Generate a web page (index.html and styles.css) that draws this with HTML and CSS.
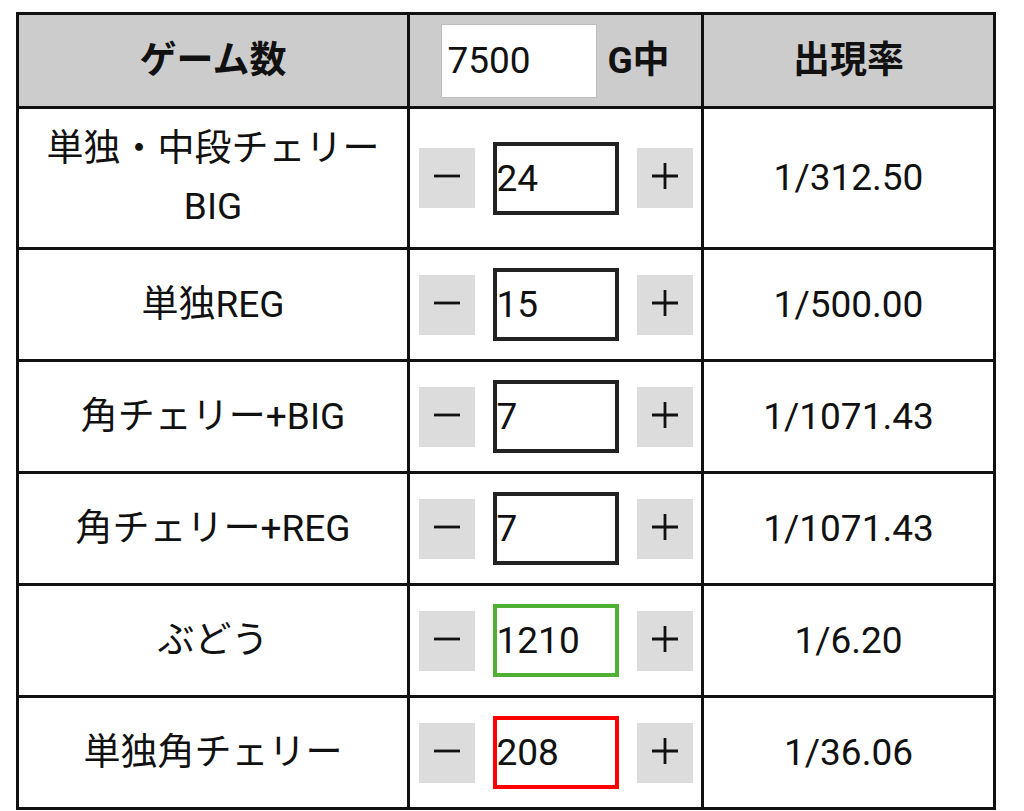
FILE: index.html
```html
<!DOCTYPE html>
<html lang="ja">
<head>
<meta charset="utf-8">
<title>出現率</title>
<link rel="stylesheet" href="styles.css">
</head>
<body>
<table class="calc">
  <colgroup>
    <col class="c1"><col class="c2"><col class="c3">
  </colgroup>
  <thead>
    <tr class="head">
      <th>ゲーム数</th>
      <th><span class="games"><input class="game-input" type="text" value="7500"><span class="unit">G中</span></span></th>
      <th>出現率</th>
    </tr>
  </thead>
  <tbody>
    <tr class="tall">
      <td class="name">単独・中段チェリー<br>BIG</td>
      <td><div class="counter"><button class="btn" aria-label="−"><svg viewBox="0 0 26 26" width="26" height="26"><path d="M0 13H26"/></svg></button><input class="num" type="text" value="24"><button class="btn" aria-label="+"><svg viewBox="0 0 26 26" width="26" height="26"><path d="M0 13H26M13 0V26"/></svg></button></div></td>
      <td>1/312.50</td>
    </tr>
    <tr>
      <td class="name">単独REG</td>
      <td><div class="counter"><button class="btn" aria-label="−"><svg viewBox="0 0 26 26" width="26" height="26"><path d="M0 13H26"/></svg></button><input class="num" type="text" value="15"><button class="btn" aria-label="+"><svg viewBox="0 0 26 26" width="26" height="26"><path d="M0 13H26M13 0V26"/></svg></button></div></td>
      <td>1/500.00</td>
    </tr>
    <tr>
      <td class="name">角チェリー+BIG</td>
      <td><div class="counter"><button class="btn" aria-label="−"><svg viewBox="0 0 26 26" width="26" height="26"><path d="M0 13H26"/></svg></button><input class="num" type="text" value="7"><button class="btn" aria-label="+"><svg viewBox="0 0 26 26" width="26" height="26"><path d="M0 13H26M13 0V26"/></svg></button></div></td>
      <td>1/1071.43</td>
    </tr>
    <tr>
      <td class="name">角チェリー+REG</td>
      <td><div class="counter"><button class="btn" aria-label="−"><svg viewBox="0 0 26 26" width="26" height="26"><path d="M0 13H26"/></svg></button><input class="num" type="text" value="7"><button class="btn" aria-label="+"><svg viewBox="0 0 26 26" width="26" height="26"><path d="M0 13H26M13 0V26"/></svg></button></div></td>
      <td>1/1071.43</td>
    </tr>
    <tr>
      <td class="name">ぶどう</td>
      <td><div class="counter"><button class="btn" aria-label="−"><svg viewBox="0 0 26 26" width="26" height="26"><path d="M0 13H26"/></svg></button><input class="num good" type="text" value="1210"><button class="btn" aria-label="+"><svg viewBox="0 0 26 26" width="26" height="26"><path d="M0 13H26M13 0V26"/></svg></button></div></td>
      <td>1/6.20</td>
    </tr>
    <tr>
      <td class="name">単独角チェリー</td>
      <td><div class="counter"><button class="btn" aria-label="−"><svg viewBox="0 0 26 26" width="26" height="26"><path d="M0 13H26"/></svg></button><input class="num bad" type="text" value="208"><button class="btn" aria-label="+"><svg viewBox="0 0 26 26" width="26" height="26"><path d="M0 13H26M13 0V26"/></svg></button></div></td>
      <td>1/36.06</td>
    </tr>
  </tbody>
</table>
</body>
</html>
```
FILE: styles.css
```css
html, body {
  margin: 0;
  padding: 0;
  background: #fff;
}
body {
  font-family: Roboto, "Noto Sans CJK JP", sans-serif;
  color: #111;
}
.calc {
  border-collapse: collapse;
  table-layout: fixed;
  width: 977px;
  margin: 12px 0 0 16px;
  font-size: 37px;
}
.c1 { width: 391px; }
.c2 { width: 294px; }
.c3 { width: 292px; }
.calc th,
.calc td {
  border: 3px solid #111;
  text-align: center;
  vertical-align: middle;
  padding: 0;
  height: 109px;
  line-height: 58px;
}
.head th {
  background: #cccccc;
  font-weight: 700;
  height: 91px;
}
.tall td {
  height: 138px;
}
.games {
  display: inline-flex;
  align-items: center;
  gap: 10px;
}
.game-input {
  box-sizing: border-box;
  width: 156px;
  height: 74px;
  border: 1px solid #bdbdbd;
  background: #fff;
  font: 400 37px Roboto, sans-serif;
  color: #111;
  padding: 0 0 0 5px;
  margin: 0;
}
.unit {
  font-weight: 700;
}
.counter {
  display: flex;
  justify-content: center;
  align-items: center;
  gap: 18px;
}
.btn {
  display: flex;
  align-items: center;
  justify-content: center;
  width: 56px;
  height: 60px;
  border: none;
  background: #dcdcdc;
  padding: 0 0 4px;
  margin: 0;
}
.btn svg {
  display: block;
  stroke: #111;
  stroke-width: 2.8;
  fill: none;
}
.num {
  box-sizing: border-box;
  width: 126px;
  height: 73px;
  border: 4px solid #222;
  background: #fff;
  font: 400 37px Roboto, sans-serif;
  color: #111;
  padding: 0;
  margin: 0;
}
.num.good { border-color: #4fb033; }
.num.bad { border-color: #ff0000; }
```
